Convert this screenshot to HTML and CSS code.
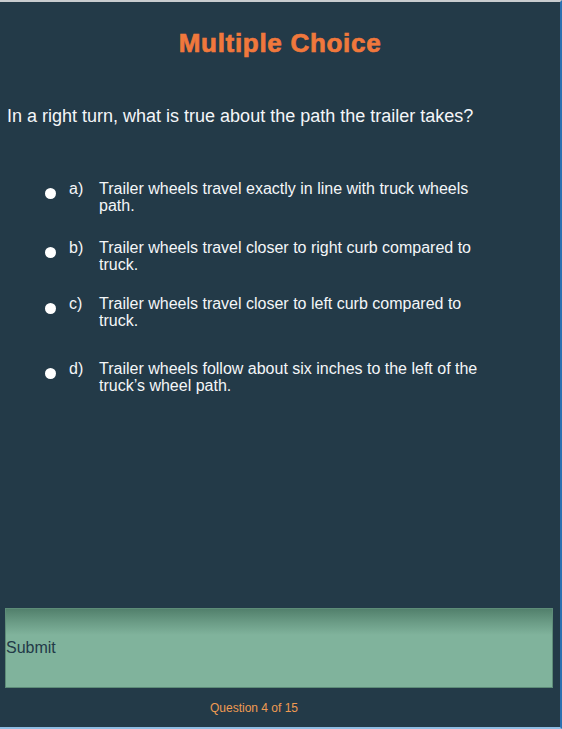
FILE: index.html
```html
<!DOCTYPE html>
<html>
<head>
<meta charset="utf-8">
<link rel="stylesheet" href="styles.css">
</head>
<body>
<div class="page">
  <h1 class="title">Multiple Choice</h1>
  <p class="question">In a right turn, what is true about the path the trailer takes?</p>
  <ul class="options">
    <li class="option opt-a"><span class="dot"></span><span class="label">a)</span><span class="text">Trailer wheels travel exactly in line with truck wheels path.</span></li>
    <li class="option opt-b"><span class="dot"></span><span class="label">b)</span><span class="text">Trailer wheels travel closer to right curb compared to truck.</span></li>
    <li class="option opt-c"><span class="dot"></span><span class="label">c)</span><span class="text">Trailer wheels travel closer to left curb compared to truck.</span></li>
    <li class="option opt-d"><span class="dot"></span><span class="label">d)</span><span class="text">Trailer wheels follow about six inches to the left of the truck’s wheel path.</span></li>
  </ul>
  <div class="spacer"></div>
  <button class="submit">Submit</button>
  <div class="counter">Question 4 of 15</div>
</div>
</body>
</html>
```
FILE: styles.css
```css
html, body {
  margin: 0;
  padding: 0;
  background: #233a48;
}
.page {
  width: 562px;
  height: 729px;
  box-sizing: border-box;
  border-top: 2px solid #c9cccf;
  border-right: 2px solid #2b70b0;
  border-bottom: 2px solid #8fbde3;
  background: #233a48;
  display: flex;
  flex-direction: column;
  font-family: "Liberation Sans", Arial, sans-serif;
  color: #ffffff;
}
.title {
  margin: 27px 0 0 0;
  text-align: center;
  font-size: 26px;
  line-height: 28px;
  font-weight: bold;
  letter-spacing: 0.7px;
  color: #f0783c;
  -webkit-text-stroke: 0.7px #f0783c;
}
.question {
  margin: 49px 0 0 7px;
  font-size: 18px;
  line-height: 20px;
  color: #f4f6f8;
}
.options {
  list-style: none;
  margin: 54px 0 0 0;
  padding: 0 0 0 45px;
}
.option {
  display: flex;
  align-items: flex-start;
  font-size: 16px;
  line-height: 17px;
  color: #f4f6f8;
}
.opt-a { margin-bottom: 25px; }
.opt-b { margin-bottom: 22px; }
.opt-c { margin-bottom: 31px; }
.dot {
  flex: none;
  width: 11px;
  height: 11px;
  border-radius: 50%;
  background: #ffffff;
  margin-top: 8px;
}
.label {
  flex: none;
  width: 30px;
  margin-left: 13px;
}
.text {
  width: 386px;
}
.spacer {
  flex: 1;
}
.submit {
  margin: 0 0 0 5px;
  width: 548px;
  height: 80px;
  box-sizing: border-box;
  border: 1px solid #5d8c78;
  background: linear-gradient(to bottom, #52806c 0px, #6c9d87 14px, #80b39c 26px, #80b39c 100%);
  font-family: "Liberation Sans", Arial, sans-serif;
  font-size: 16px;
  color: #233a48;
  text-align: left;
  padding: 0 0 1px 0;
}
.counter {
  margin: 13px 0 12px 0;
  padding-right: 52px;
  text-align: center;
  font-size: 12px;
  line-height: 14px;
  color: #ef9a52;
}
```
